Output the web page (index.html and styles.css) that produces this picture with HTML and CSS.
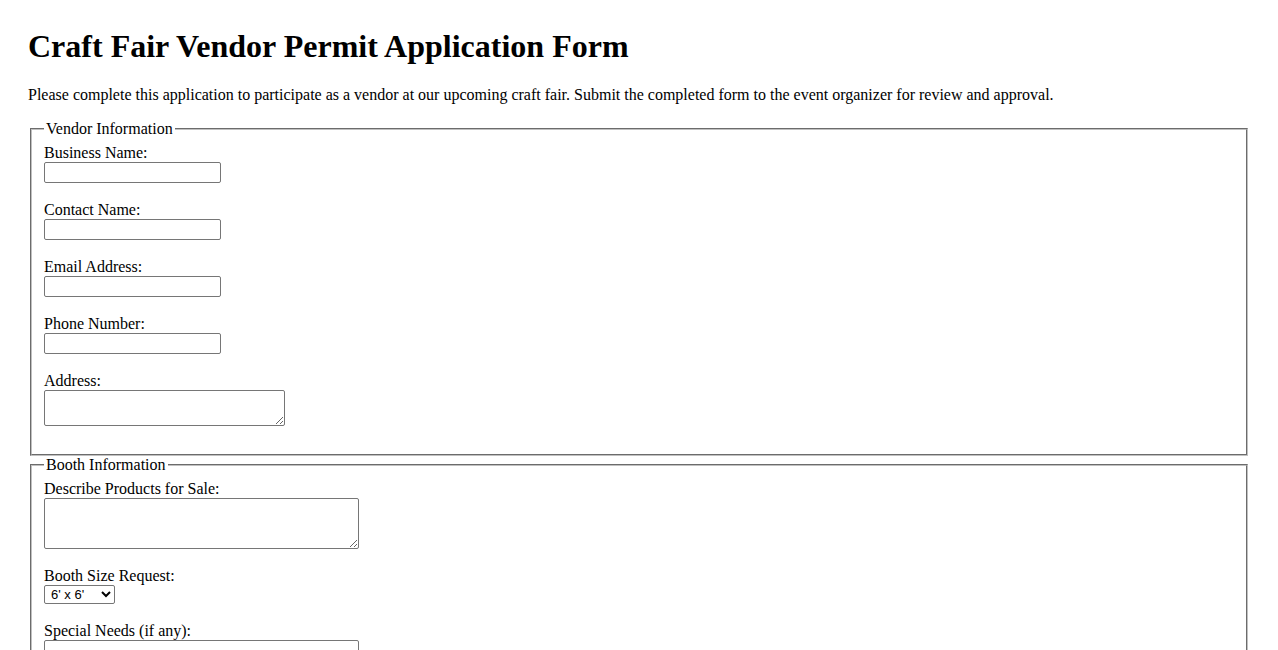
FILE: index.html
```html
<!DOCTYPE html>
<html lang="en">
<head>
    <meta charset="UTF-8">
    <meta name="viewport" content="width=device-width, initial-scale=1.0">
    <title>Craft Fair Vendor Permit Application Form</title>
    <link rel="stylesheet" href="styles.css">
</head>
<body>
    <h1>Craft Fair Vendor Permit Application Form</h1>
    <p>Please complete this application to participate as a vendor at our upcoming craft fair. Submit the completed form to the event organizer for review and approval.</p>
    <form id="permitForm">
        <fieldset>
            <legend>Vendor Information</legend>
            <div class="form-group">
                <label for="business">Business Name:</label>
                <input type="text" id="business" name="business">
            </div>
            <div class="form-group">
                <label for="contact">Contact Name:</label>
                <input type="text" id="contact" name="contact">
            </div>
            <div class="form-group">
                <label for="email">Email Address:</label>
                <input type="email" id="email" name="email">
            </div>
            <div class="form-group">
                <label for="phone">Phone Number:</label>
                <input type="tel" id="phone" name="phone">
            </div>
            <div class="form-group">
                <label for="address">Address:</label>
                <textarea id="address" name="address" class="short"></textarea>
            </div>
        </fieldset>
        <fieldset>
            <legend>Booth Information</legend>
            <div class="form-group">
                <label for="products">Describe Products for Sale:</label>
                <textarea id="products" name="products" class="wide"></textarea>
            </div>
            <div class="form-group">
                <label for="booth">Booth Size Request:</label>
                <select id="booth" name="booth">
                    <option value="6x6">6' x 6'</option>
                    <option value="8x8">8' x 8'</option>
                    <option value="10x10">10' x 10'</option>
                </select>
            </div>
            <div class="form-group">
                <label for="needs">Special Needs (if any):</label>
                <textarea id="needs" name="needs" class="wide"></textarea>
            </div>
        </fieldset>
    </form>
</body>
</html>
```

FILE: styles.css
```css
body {
    font-family: "Liberation Serif", "Times New Roman", serif;
    font-size: 16px;
    margin: 8px;
    padding: 20px;
    color: #000;
    background: #fff;
}
h1 {
    font-size: 32px;
    margin: 0 0 21px;
}
p {
    margin: 0 0 16px;
}
fieldset {
    margin: 0 2px;
    padding: 6px 12px 10px;
    border: 2px groove #c0c0c0;
}
legend {
    padding: 0 2px;
}
.form-group {
    margin-bottom: 18px;
}
label {
    display: block;
}
input, textarea, select {
    display: block;
    box-sizing: border-box;
    margin: 0;
    font-family: "Liberation Sans", Arial, sans-serif;
    font-size: 13px;
    border: 1px solid #767676;
    border-radius: 2px;
    background: #fff;
}
input {
    width: 177px;
    height: 21px;
    padding: 1px 2px;
}
textarea {
    padding: 2px;
}
textarea.short {
    width: 241px;
    height: 36px;
}
textarea.wide {
    width: 315px;
    height: 51px;
}
select {
    width: 71px;
    height: 19px;
    padding: 0 0 0 2px;
}
```
